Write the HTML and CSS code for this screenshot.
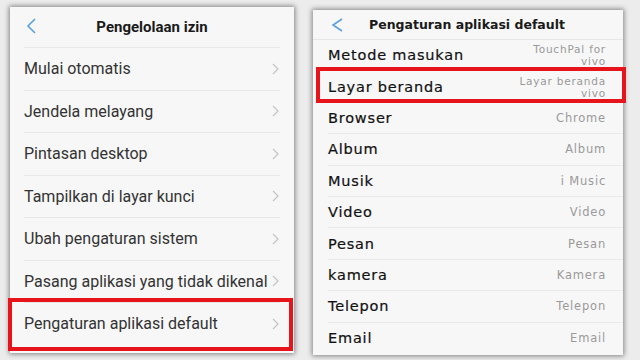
FILE: index.html
```html
<!DOCTYPE html>
<html>
<head>
<meta charset="utf-8">
<link rel="stylesheet" href="styles.css">
</head>
<body>
<div class="stage">
  <section class="panel left">
    <header class="head">
      <svg class="back" width="12" height="16" viewBox="0 0 12 16"><polyline points="9,1 2,8 9,15" fill="none" stroke="#5b9fe0" stroke-width="1.6"/></svg>
      <h1 class="title">Pengelolaan izin</h1>
    </header>
    <ul class="list">
      <li class="row"><span>Mulai otomatis</span><svg class="chev" width="8" height="12" viewBox="0 0 8 12"><polyline points="1,1 6,6 1,11" fill="none" stroke="#c4c4c4" stroke-width="1.2"/></svg></li>
      <li class="row"><span>Jendela melayang</span><svg class="chev" width="8" height="12" viewBox="0 0 8 12"><polyline points="1,1 6,6 1,11" fill="none" stroke="#c4c4c4" stroke-width="1.2"/></svg></li>
      <li class="row"><span>Pintasan desktop</span><svg class="chev" width="8" height="12" viewBox="0 0 8 12"><polyline points="1,1 6,6 1,11" fill="none" stroke="#c4c4c4" stroke-width="1.2"/></svg></li>
      <li class="row"><span>Tampilkan di layar kunci</span><svg class="chev" width="8" height="12" viewBox="0 0 8 12"><polyline points="1,1 6,6 1,11" fill="none" stroke="#c4c4c4" stroke-width="1.2"/></svg></li>
      <li class="row"><span>Ubah pengaturan sistem</span><svg class="chev" width="8" height="12" viewBox="0 0 8 12"><polyline points="1,1 6,6 1,11" fill="none" stroke="#c4c4c4" stroke-width="1.2"/></svg></li>
      <li class="row"><span>Pasang aplikasi yang tidak dikenal</span><svg class="chev" width="8" height="12" viewBox="0 0 8 12"><polyline points="1,1 6,6 1,11" fill="none" stroke="#c4c4c4" stroke-width="1.2"/></svg></li>
      <li class="row hl hl-left"><span>Pengaturan aplikasi default</span><svg class="chev" width="8" height="12" viewBox="0 0 8 12"><polyline points="1,1 6,6 1,11" fill="none" stroke="#c4c4c4" stroke-width="1.2"/></svg></li>
    </ul>
  </section>
  <section class="panel right">
    <header class="head small">
      <svg class="back2" width="14" height="14" viewBox="0 0 14 14"><polyline points="12,1 3,7 12,13" fill="none" stroke="#5b9fe0" stroke-width="1.6"/></svg>
      <h1 class="title2">Pengaturan aplikasi default</h1>
    </header>
    <ul class="list2">
      <li class="row2"><span class="lab">Metode masukan</span><span class="val"><span class="ln">TouchPal for</span><span class="ln">vivo</span></span></li>
      <li class="row2 hl hl-right"><span class="lab">Layar beranda</span><span class="val"><span class="ln">Layar beranda</span><span class="ln">vivo</span></span></li>
      <li class="row2"><span class="lab">Browser</span><span class="val">Chrome</span></li>
      <li class="row2"><span class="lab">Album</span><span class="val">Album</span></li>
      <li class="row2"><span class="lab">Musik</span><span class="val">i Music</span></li>
      <li class="row2"><span class="lab">Video</span><span class="val">Video</span></li>
      <li class="row2"><span class="lab">Pesan</span><span class="val">Pesan</span></li>
      <li class="row2"><span class="lab">kamera</span><span class="val">Kamera</span></li>
      <li class="row2"><span class="lab">Telepon</span><span class="val">Telepon</span></li>
      <li class="row2"><span class="lab">Email</span><span class="val">Email</span></li>
    </ul>
  </section>
</div>
</body>
</html>
```
FILE: styles.css
```css
* { box-sizing: border-box; }
html, body { margin: 0; padding: 0; }
body {
  width: 640px;
  height: 360px;
  overflow: hidden;
  background: #ececec;
}
.stage {
  display: flex;
  align-items: flex-start;
  gap: 19px;
  padding: 7px 0 0 10px;
}
.panel {
  background: #f7f7f7;
  box-shadow: 0 0 5px 1px rgba(0,0,0,0.45);
}
.left { width: 284px; height: 346px; }
.right { width: 310px; height: 345px; margin-top: 3px; }

.head {
  height: 40px;
  display: flex;
  align-items: center;
  position: relative;
  justify-content: center;
}
.back { position: absolute; left: 16px; top: 11px; }
.title {
  margin: 0;
  font: bold 15px "Roboto", "Liberation Sans", sans-serif;
  color: #1a1a1a;
}
.list { list-style: none; margin: 0; padding: 0 14px 0 14px; }
.row {
  height: 42.5px;
  display: flex;
  align-items: center;
  justify-content: space-between;
  border-top: 1px solid #e8e8e8;
  font: 16px "Roboto", "Liberation Sans", sans-serif;
  color: #333;
}
.row span { white-space: nowrap; }
.chev { flex: none; }

.hl { position: relative; }
.hl::after {
  content: "";
  position: absolute;
  border: 4px solid #e8141b;
  pointer-events: none;
}
.hl-left::after { left: -16px; right: -13px; top: -5px; bottom: -6px; }

.head.small { height: 30px; border-bottom: 1px solid #e6e6e6; }
.back2 { position: absolute; left: 17px; top: 8px; }
.title2 {
  margin: 0 0 0 -2px;
  font: bold 12.5px "DejaVu Sans", "Liberation Sans", sans-serif;
  color: #1a1a1a;
}
.list2 { list-style: none; margin: 0; padding: 0 0 0 15px; }
.row2 {
  height: 31.4px;
  display: flex;
  align-items: center;
  justify-content: space-between;
  border-bottom: 1px solid #e9e9e9;
  padding-right: 17px;
}
.row2:last-child { border-bottom: none; }
.lab {
  font: 14.5px "DejaVu Sans", "Liberation Sans", sans-serif;
  letter-spacing: 0.8px;
  color: #111;
  -webkit-text-stroke: 0.2px #111;
}
.val {
  display: flex;
  flex-direction: column;
  align-items: flex-end;
  font: 11.5px/12px "DejaVu Sans", "Liberation Sans", sans-serif;
  letter-spacing: 0.8px;
  color: #9a9a9a;
  text-align: right;
}
.ln { font-size: 10.5px; line-height: 12px; }
.hl-right::after { left: -12px; right: -3px; top: -4px; bottom: -1px; }
```
